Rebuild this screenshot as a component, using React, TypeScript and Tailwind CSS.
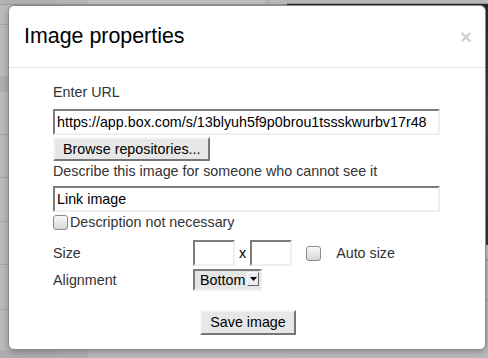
import React from "react";

const inset =
  "border-2 border-t-[#7c7c7c] border-l-[#7c7c7c] border-r-[#efefef] border-b-[#efefef]";
const outset =
  "border-2 border-t-[#f4f4f4] border-l-[#f4f4f4] border-r-[#777777] border-b-[#777777] bg-[#e7e7e7]";

function Checkbox() {
  return (
    <span className="block h-[15px] w-[15px] shrink-0 rounded-[3px] border border-[#8c8c8c] bg-gradient-to-b from-[#fafafa] to-[#d6d6d6]" />
  );
}

function TextBox({ value, w }: { value?: string; w: string }) {
  return (
    <input
      readOnly
      value={value ?? ""}
      className={`${inset} ${w} h-[26px] bg-white px-[2px] text-[14.3px] text-black outline-none`}
    />
  );
}

export default function App() {
  return (
    <div className="relative h-[358px] w-[488px] overflow-hidden bg-[#bababa] font-['Liberation_Sans',Arial,sans-serif]">
      {/* page behind the dialog */}
      <div className="flex h-full">
        <div className="flex w-[287px] flex-col">
          <div className="flex h-[5px] border-b border-[#9a9a9a]">
            <div className="w-[58px] bg-[#b2b2b2]" />
            <div className="w-[30px] bg-[#b7b7b7]" />
            <div className="w-[180px] border-r border-[#a0a0a0] bg-[#bdbdbd]" />
            <div className="flex-1 bg-[#b9b9b9]" />
          </div>
          <div className="h-[20px] border-b border-[#a6a6a6]" />
          <div className="h-[51px]" />
          <div className="h-[16px] bg-[#adadad]" />
          <div className="h-[43px] border-b border-[#a6a6a6]" />
          <div className="h-[43px] border-b border-[#a6a6a6]" />
          <div className="h-[44px] border-b border-[#a6a6a6]" />
          <div className="h-[43px] border-b border-[#a6a6a6]" />
          <div className="h-[45px] border-b border-[#a6a6a6]" />
          <div className="h-[40px]" />
          <div className="flex flex-1">
            <div className="w-[57px] bg-[#adadad]" />
            <div className="w-[31px] bg-[#b1b1b1]" />
            <div className="flex-1 bg-[#bbbbbb]" />
          </div>
        </div>
        <div className="flex flex-1 flex-col">
          <div className="h-[4px] border-b border-[#9a9a9a] bg-[#b9b9b9]" />
          <div className="h-[241px] bg-gradient-to-b from-[#2a2621] via-[#4d4230] to-[#35302a]" />
          <div className="h-[15px] border-b border-[#8f8f8f] bg-[#c0c0c0]" />
          <div className="h-[40px] border-b border-[#9a9a9a]" />
          <div className="flex-1" />
        </div>
      </div>

      {/* dialog */}
      <div className="absolute left-[8px] top-[5px] flex h-[345px] w-[478px] flex-col rounded-[6px] border border-[#8a8a8a] bg-white shadow-[0_2px_6px_rgba(0,0,0,0.25)]">
        <div className="flex h-[62px] items-center justify-between border-b border-[#e5e5e5] pl-[15px] pr-[13px]">
          <span className="text-[21.4px] leading-none text-black">Image properties</span>
          <span className="text-[21px] font-bold leading-none text-black/20">×</span>
        </div>

        <div className="flex flex-col items-start pl-[44px] pt-[14px] text-[14.3px] leading-[20px] text-[#333]">
          <div>Enter URL</div>
          <div className="mt-[7px]">
            <TextBox
              w="w-[387px]"
              value="https://app.box.com/s/13blyuh5f9p0brou1tssskwurbv17r48"
            />
          </div>
          <button
            className={`${outset} mt-[2px] h-[24px] px-[8px] text-[14.3px] leading-[16px] text-black`}
          >
            Browse repositories...
          </button>
          <div>Describe this image for someone who cannot see it</div>
          <div className="mt-[5px]">
            <TextBox w="w-[387px]" value="Link image" />
          </div>
          <div className="flex h-[20px] items-center">
            <Checkbox />
            <span className="ml-[2px]">Description not necessary</span>
          </div>

          <div className="mt-[8px] flex h-[26px] items-center">
            <span className="w-[140px]">Size</span>
            <TextBox w="w-[42px]" />
            <span className="mx-[4px] text-black">x</span>
            <TextBox w="w-[42px]" />
            <span className="ml-[14px]">
              <Checkbox />
            </span>
            <span className="ml-[15px]">Auto size</span>
          </div>

          <div className="mt-[3px] flex h-[22px] items-center">
            <span className="w-[140px]">Alignment</span>
            <div
              className={`${inset} flex h-[22px] w-[69px] items-start bg-[#e6e6e6] pl-[5px] pr-[1px]`}
            >
              <span className="flex-1 text-[14.3px] leading-[18px] text-black">Bottom</span>
              <span className="mt-[1px] flex h-[14px] w-[12px] shrink-0 items-center justify-center border border-t-[#fff] border-l-[#fff] border-r-[#666] border-b-[#666] bg-[#ececec]">
                <svg width="7" height="4" viewBox="0 0 7 4">
                  <path d="M0 0h7L3.5 4z" fill="#000" />
                </svg>
              </span>
            </div>
          </div>
        </div>

        <div className="mt-[19px] flex justify-center pl-[2px]">
          <button
            className={`${outset} h-[25px] px-[8px] text-[14.3px] leading-[17px] text-black`}
          >
            Save image
          </button>
        </div>
      </div>
    </div>
  );
}
